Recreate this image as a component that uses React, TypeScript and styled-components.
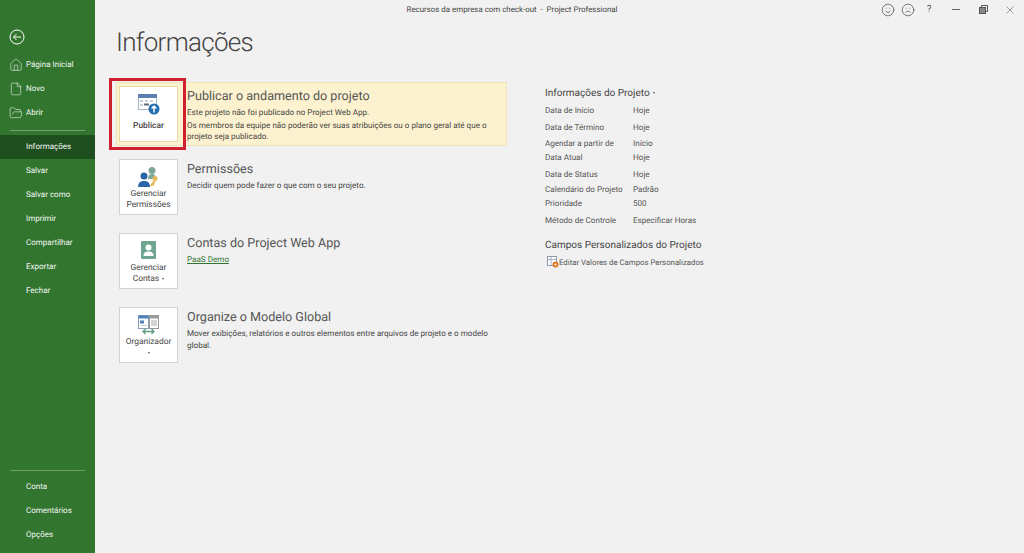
import React from 'react'
import styled, { createGlobalStyle } from 'styled-components'
import { File, FolderOpen, Frown, Home, Smile, X } from 'lucide-react'

const GlobalStyle = createGlobalStyle`
  html, body {
    margin: 0;
    padding: 0;
    background: #f1f1f1;
  }
  body {
    font-family: Roboto, "Open Sans", "Liberation Sans", sans-serif;
    color: #444;
    text-rendering: geometricPrecision;
  }
  * {
    box-sizing: border-box;
  }
`

const topNav = [
  { label: 'Página Inicial', icon: <Home size={14} strokeWidth={1} /> },
  { label: 'Novo', icon: <File size={14} strokeWidth={1} /> },
  { label: 'Abrir', icon: <FolderOpen size={14} strokeWidth={1} /> },
]
const middleNav = ['Informações', 'Salvar', 'Salvar como', 'Imprimir', 'Compartilhar', 'Exportar', 'Fechar']
const bottomNav = ['Conta', 'Comentários', 'Opções']

const projectInfo = [
  ['Data de Início', 'Hoje'],
  ['Data de Término', 'Hoje'],
  ['Agendar a partir de', 'Início'],
  ['Data Atual', 'Hoje'],
  ['Data de Status', 'Hoje'],
  ['Calendário do Projeto', 'Padrão'],
  ['Prioridade', '500'],
  ['Método de Controle', 'Especificar Horas'],
]

const PublishIcon = () => (
  <svg width="22" height="21" viewBox="0 0 22 21">
    <rect x="0.500" y="0.500" width="18" height="15" fill="#fff" stroke="#a9b4c2" />
    <rect x="0" y="0" width="19" height="4" fill="#5b7fae" />
    <path d="M2 6h3v2H2zM7 6h3v2H7zM12 6h3v2h-3zM2 10h3v2H2z" fill="#c6ced8" />
    <rect x="6" y="9.500" width="5" height="2" fill="#5a6b80" />
    <circle cx="16" cy="15" r="5.500" fill="#1f6fb0" />
    <path d="M16 18.500v-6M13.600 14.600 16 12l2.400 2.600" fill="none" stroke="#fff" strokeWidth="1.500" />
  </svg>
)

const PermissionsIcon = () => (
  <svg width="21" height="21" viewBox="0 0 21 21">
    <circle cx="14" cy="3.500" r="3.500" fill="#7fa898" />
    <path d="M10 12c0-3.500 1.500-5 4-5s4 1.500 4 5z" fill="#7fa898" />
    <circle cx="6" cy="9" r="3.500" fill="#2a66a8" />
    <path d="M0 20c0-4 2-6 6-6s6 2 6 6z" fill="#2a66a8" />
    <circle cx="17" cy="11.500" r="2.500" fill="#e8b85c" />
    <path d="m15.500 13.500-3.500 5 1.500 1 1-1 1 .5 2-5z" fill="#e8b85c" />
  </svg>
)

const AccountsIcon = () => (
  <svg width="15" height="18" viewBox="0 0 15 18">
    <rect width="15" height="18" rx="1" fill="#6fa58f" />
    <circle cx="7.500" cy="6.500" r="3" fill="#fff" />
    <path d="M2.500 15c0-3.500 2-4.500 5-4.500s5 1 5 4.500z" fill="#fff" />
  </svg>
)

const OrganizerIcon = () => (
  <svg width="21" height="20" viewBox="0 0 21 20">
    <rect x="0.500" y="0.500" width="10" height="13" fill="#fff" stroke="#8aa0b8" />
    <rect x="0.500" y="0.500" width="10" height="3" fill="#4f82bd" />
    <rect x="2" y="5.500" width="4" height="3" fill="#4f82bd" />
    <path d="M3 10.500h6" stroke="#c0c8d2" />
    <rect x="11.500" y="0.500" width="9" height="13" fill="#fff" stroke="#9a9a9a" />
    <rect x="11.500" y="0.500" width="9" height="3" fill="#9a9a9a" />
    <path d="M13 6h6M13 8h6M13 10h6" stroke="#a8a8a8" />
    <path d="M5 16.500h11M7.500 14 5 16.500 7.500 19M13.500 14l2.500 2.500-2.500 2.500" fill="none" stroke="#5f9e86" strokeWidth="1.300" />
  </svg>
)

const CustomFieldsIcon = () => (
  <svg width="12" height="12" viewBox="0 0 12 12">
    <rect x="0.500" y="0.500" width="9" height="9" fill="#fff" stroke="#8c9bad" />
    <path d="M1 3.500h8M4 1v8" stroke="#a8b6c6" />
    <circle cx="8.500" cy="8.500" r="3" fill="#e07b28" />
    <circle cx="8.500" cy="8.500" r="1" fill="#fff" />
  </svg>
)

const App = () => (
  <>
    <GlobalStyle />
    <Page>
      <Sidebar>
        <BackButton aria-label="Voltar">
          <svg width="16" height="16" viewBox="0 0 16 16" fill="none" stroke="#fff" strokeWidth="1">
            <circle cx="8" cy="8" r="7" />
            <path d="M12 8H4.500M7.500 5 4.500 8l3 3" />
          </svg>
        </BackButton>
        <NavGroup>
          {topNav.map((item) => (
            <NavItem key={item.label}>
              <NavIcon>{item.icon}</NavIcon>
              {item.label}
            </NavItem>
          ))}
        </NavGroup>
        <NavDivider />
        <NavGroup>
          {middleNav.map((label, idx) => (
            <NavItem key={label} $active={idx === 0}>
              {label}
            </NavItem>
          ))}
        </NavGroup>
        <BottomNav>
          <NavDivider />
          {bottomNav.map((label) => (
            <NavItem key={label}>{label}</NavItem>
          ))}
        </BottomNav>
      </Sidebar>

      <Main>
        <TitleBar>
          <WindowTitle>Recursos da empresa com check-out&nbsp; -&nbsp; Project Professional</WindowTitle>
          <WindowControls>
            <Smile size={14} strokeWidth={1.300} />
            <Frown size={14} strokeWidth={1.300} />
            <HelpMark>?</HelpMark>
            <MinimizeMark />
            <svg width="9" height="9" viewBox="0 0 9 9" fill="none" stroke="#555">
              <path d="M2.500 2V.5h6v6H7" />
              <rect x="0.500" y="2.500" width="6" height="6" fill="#888" />
            </svg>
            <X size={12} strokeWidth={1.100} />
          </WindowControls>
        </TitleBar>

        <Heading>Informações</Heading>

        <Columns>
          <Sections>
            <Section $highlight>
              <ActionButton $highlight>
                <IconSlot>
                  <PublishIcon />
                </IconSlot>
                <ButtonLabel $highlight>Publicar</ButtonLabel>
              </ActionButton>
              <SectionText>
                <SectionTitle>Publicar o andamento do projeto</SectionTitle>
                <SectionBody>Este projeto não foi publicado no Project Web App.</SectionBody>
                <SectionNote>
                  Os membros da equipe não poderão ver suas atribuições ou o plano geral até que o projeto seja publicado.
                </SectionNote>
              </SectionText>
              <RedMark />
            </Section>

            <Section>
              <ActionButton>
                <IconSlot>
                  <PermissionsIcon />
                </IconSlot>
                <ButtonLabel>Gerenciar<br />Permissões</ButtonLabel>
              </ActionButton>
              <SectionText>
                <SectionTitle>Permissões</SectionTitle>
                <SectionBody>Decidir quem pode fazer o que com o seu projeto.</SectionBody>
              </SectionText>
            </Section>

            <Section>
              <ActionButton>
                <IconSlot>
                  <AccountsIcon />
                </IconSlot>
                <ButtonLabel>Gerenciar<br />Contas <Caret /></ButtonLabel>
              </ActionButton>
              <SectionText>
                <SectionTitle>Contas do Project Web App</SectionTitle>
                <SectionLink href="#">PaaS Demo</SectionLink>
              </SectionText>
            </Section>

            <Section>
              <ActionButton>
                <IconSlot>
                  <OrganizerIcon />
                </IconSlot>
                <ButtonLabel>Organizador<br /><Caret /></ButtonLabel>
              </ActionButton>
              <SectionText>
                <SectionTitle>Organize o Modelo Global</SectionTitle>
                <SectionBody>
                  Mover exibições, relatórios e outros elementos entre arquivos de projeto e o modelo global.
                </SectionBody>
              </SectionText>
            </Section>
          </Sections>

          <Details>
            <DetailsTitle>Informações do Projeto <Caret /></DetailsTitle>
            <InfoGrid>
              {projectInfo.map(([label, value]) => (
                <React.Fragment key={label}>
                  <InfoLabel>{label}</InfoLabel>
                  <InfoValue>{value}</InfoValue>
                </React.Fragment>
              ))}
            </InfoGrid>
            <CustomTitle>Campos Personalizados do Projeto</CustomTitle>
            <CustomLink>
              <CustomFieldsIcon />
              Editar Valores de Campos Personalizados
            </CustomLink>
          </Details>
        </Columns>
      </Main>
    </Page>
  </>
)

export default App

const Page = styled.div`
  display: flex;
  width: 1024px;
  height: 553px;
  overflow: hidden;
  background: #f1f1f1;
`

const Sidebar = styled.nav`
  display: flex;
  flex-direction: column;
  flex: 0 0 95px;
  padding-top: 29px;
  background: #31752f;
  color: #fff;
`

const BackButton = styled.div`
  display: flex;
  height: 17px;
  margin-bottom: 7px;
  padding-left: 9px;
`

const NavGroup = styled.div`
  display: flex;
  flex-direction: column;
`

const NavItem = styled.div<{ $active?: boolean }>`
  display: flex;
  align-items: center;
  height: 24px;
  padding: 0 0 1px 26px;
  position: relative;
  font-size: 8px;
  white-space: nowrap;
  color: #f3f7f2;
  background: ${(p) => (p.$active ? '#1f4e1f' : 'transparent')};
`

const NavIcon = styled.span`
  display: flex;
  position: absolute;
  left: 9px;
`

const NavDivider = styled.div`
  flex: none;
  height: 1px;
  margin: 5px 10px 4px;
  background: #6fa06d;
`

const BottomNav = styled.div`
  display: flex;
  flex-direction: column;
  margin-top: auto;
  padding-bottom: 6px;
`

const Main = styled.main`
  display: flex;
  flex-direction: column;
  flex: 1;
  min-width: 0;
`

const TitleBar = styled.header`
  display: grid;
  grid-template-columns: 834px 1fr;
  align-items: center;
  height: 19px;
`

const WindowTitle = styled.div`
  text-align: center;
  font-size: 7.900px;
  color: #444;
`

const WindowControls = styled.div`
  display: grid;
  grid-template-columns: 20px 20px 22px 32px 22px 32px;
  justify-items: center;
  align-items: center;
  color: #555;
  margin-left: -51px;
`

const HelpMark = styled.span`
  font-size: 10px;
  line-height: 14px;
  padding-top: 1px;
`

const MinimizeMark = styled.span`
  width: 8px;
  height: 1px;
  background: #666;
`

const Heading = styled.h1`
  margin: 7px 0 0 21px;
  height: 56px;
  font-size: 26px;
  line-height: 34px;
  letter-spacing: -0.700px;
  font-weight: 300;
  color: #444;
`

const Columns = styled.div`
  display: flex;
`

const Sections = styled.div`
  display: flex;
  flex-direction: column;
  flex: 0 0 450px;
  gap: 18px;
  padding-left: 21px;
`

const Section = styled.section<{ $highlight?: boolean }>`
  display: flex;
  position: relative;
  gap: 9px;
  width: 391px;
  min-height: 56px;
  padding-left: 3px;
  ${(p) =>
    p.$highlight &&
    `
    height: 64px;
    padding-top: 3px;
    padding-left: 2px;
    margin-bottom: -5px;
    background: #fdf2cf;
    border: 1px solid #f0e3b4;
  `}
`

const ActionButton = styled.div<{ $highlight?: boolean }>`
  display: flex;
  flex-direction: column;
  align-items: center;
  flex: 0 0 59px;
  height: 56px;
  padding-top: 6px;
  background: #fff;
  border: 1px solid ${(p) => (p.$highlight ? '#ead9a0' : '#d2d2d2')};
`

const IconSlot = styled.div`
  display: flex;
  justify-content: center;
  align-items: flex-start;
  height: 21px;
  padding-top: 1px;
`

const ButtonLabel = styled.div<{ $highlight?: boolean }>`
  margin-top: ${(p) => (p.$highlight ? '7px' : '2px')};
  text-align: center;
  font-size: 8.400px;
  line-height: 11px;
  color: #444;
  font-weight: ${(p) => (p.$highlight ? 500 : 400)};
`

const Caret = styled.span`
  display: inline-block;
  width: 0;
  height: 0;
  margin-left: 1px;
  vertical-align: middle;
  border-left: 1.500px solid transparent;
  border-right: 1.500px solid transparent;
  border-top: 2px solid #555;
`

const SectionText = styled.div`
  display: flex;
  flex-direction: column;
  flex: 0 0 312px;
  padding-top: 2px;
  min-width: 0;
`

const SectionTitle = styled.h2`
  margin: 0 0 1px;
  font-size: 12.600px;
  line-height: 18px;
  font-weight: 400;
  color: #555;
`

const SectionBody = styled.p`
  margin: 0;
  font-size: 8.100px;
  line-height: 11.500px;
  color: #444;
`

const SectionNote = styled(SectionBody)`
  margin-top: 1px;
`

const SectionLink = styled.a`
  align-self: flex-start;
  font-size: 8.100px;
  line-height: 11.500px;
  color: #31752f;
`

const RedMark = styled.div`
  position: absolute;
  left: -8px;
  top: -5px;
  width: 77px;
  height: 72px;
  border: 3px solid #d0202e;
`

const Details = styled.aside`
  display: flex;
  flex-direction: column;
  padding: 5px 0 0;
`

const DetailsTitle = styled.h3`
  margin: 0 0 2px;
  font-size: 10px;
  line-height: 14px;
  font-weight: 400;
  color: #444;
`

const InfoGrid = styled.div`
  display: grid;
  grid-template-columns: 88px auto;
  grid-template-rows: 17px 16px 14px 17px 15px 14px 17px 14px;
  align-items: start;
  line-height: 14px;
  font-size: 8.100px;
  color: #555;
`

const InfoLabel = styled.div`
  white-space: nowrap;
`

const InfoValue = styled.div`
  white-space: nowrap;
`

const CustomTitle = styled.h3`
  margin: 12px 0 2px;
  font-size: 10px;
  line-height: 14px;
  font-weight: 400;
  color: #444;
`

const CustomLink = styled.div`
  display: flex;
  align-items: center;
  height: 14px;
  margin-left: 2px;
  font-size: 7.800px;
  color: #555;
`
